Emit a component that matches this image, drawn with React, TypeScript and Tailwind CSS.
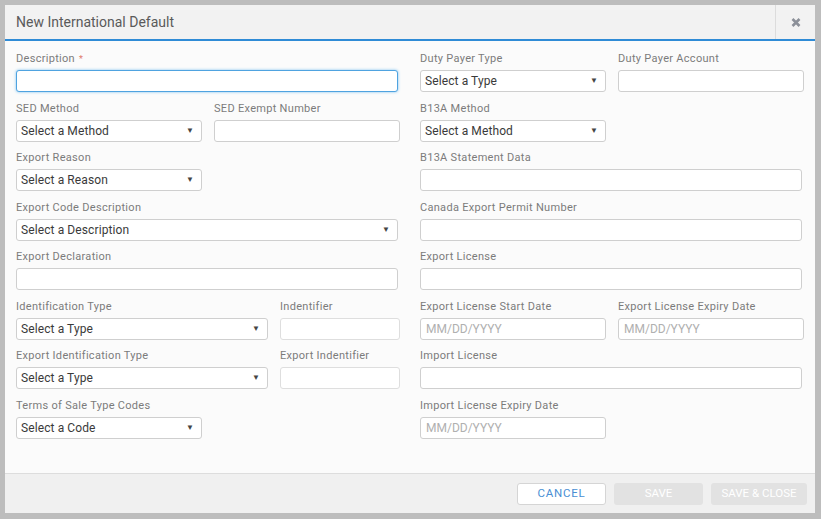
import React from "react";

const font = { fontFamily: "Roboto, 'Liberation Sans', Arial, sans-serif" };

function Label({ text, req }: { text: string; req?: boolean }) {
  return (
    <div className="h-[18px] text-[11px] leading-[14px] text-[#7b7b7b] tracking-[0.3px]">
      {text}
      {req && <span className="ml-[4px] text-[#e07a6a] text-[9px]">*</span>}
    </div>
  );
}

function Select({ text, w }: { text: string; w: string }) {
  return (
    <div
      className={`${w} h-[22px] flex items-center justify-between rounded-[3px] border border-[#cfcfcf] bg-white pl-[4px] pr-[7px] text-[12px] text-[#3a3a3a] tracking-[0.1px]`}
    >
      <span>{text}</span>
      <span className="text-[8px] text-[#444]">▼</span>
    </div>
  );
}

function Input({ w, ph, light, focus }: { w: string; ph?: string; light?: boolean; focus?: boolean }) {
  const border = focus
    ? "border-[#4fa3e0] shadow-[0_0_3px_#7cc0f0]"
    : light
    ? "border-[#dedede]"
    : "border-[#cfcfcf]";
  return (
    <div
      className={`${w} h-[22px] flex items-center rounded-[3px] border ${border} bg-white pl-[5px] text-[12px] text-[#b0b0b0]`}
    >
      {ph}
    </div>
  );
}

function Field({ label, req, children }: { label: string; req?: boolean; children: React.ReactNode }) {
  return (
    <div className="flex flex-col">
      <Label text={label} req={req} />
      {children}
    </div>
  );
}

function Row({ children }: { children: React.ReactNode }) {
  return <div className="flex gap-[12px] h-[49.5px]">{children}</div>;
}

export default function App() {
  return (
    <div className="w-[821px] h-[519px] bg-[#bdbdbd] p-[5px]" style={font}>
      <div className="w-[810px] h-[508px] bg-[#fbfbfb] flex flex-col">
        <div className="h-[36px] flex bg-[#f2f2f2] border-b-2 border-[#2f8bd6]">
          <div className="flex-1 flex items-center pl-[11px] text-[14px] text-[#5a5a5a]">
            New International Default
          </div>
          <div className="w-[40px] border-l border-[#dcdcdc] flex items-center justify-center">
            <svg width="10" height="9" viewBox="0 0 10 9">
              <path d="M1.5 1 L8.5 8 M8.5 1 L1.5 8" stroke="#8c9099" strokeWidth="2.6" strokeLinecap="butt" />
            </svg>
          </div>
        </div>
        <div className="flex-1 flex gap-[20px] pl-[11px] pt-[11px]">
          <div className="w-[384px] flex flex-col">
            <Row>
              <Field label="Description" req>
                <Input w="w-[382px]" focus />
              </Field>
            </Row>
            <Row>
              <Field label="SED Method">
                <Select w="w-[186px]" text="Select a Method" />
              </Field>
              <Field label="SED Exempt Number">
                <Input w="w-[186px]" />
              </Field>
            </Row>
            <Row>
              <Field label="Export Reason">
                <Select w="w-[186px]" text="Select a Reason" />
              </Field>
            </Row>
            <Row>
              <Field label="Export Code Description">
                <Select w="w-[382px]" text="Select a Description" />
              </Field>
            </Row>
            <Row>
              <Field label="Export Declaration">
                <Input w="w-[382px]" />
              </Field>
            </Row>
            <Row>
              <Field label="Identification Type">
                <Select w="w-[252px]" text="Select a Type" />
              </Field>
              <Field label="Indentifier">
                <Input w="w-[120px]" light />
              </Field>
            </Row>
            <Row>
              <Field label="Export Identification Type">
                <Select w="w-[252px]" text="Select a Type" />
              </Field>
              <Field label="Export Indentifier">
                <Input w="w-[120px]" light />
              </Field>
            </Row>
            <Row>
              <Field label="Terms of Sale Type Codes">
                <Select w="w-[186px]" text="Select a Code" />
              </Field>
            </Row>
          </div>
          <div className="w-[384px] flex flex-col">
            <Row>
              <Field label="Duty Payer Type">
                <Select w="w-[186px]" text="Select a Type" />
              </Field>
              <Field label="Duty Payer Account">
                <Input w="w-[186px]" />
              </Field>
            </Row>
            <Row>
              <Field label="B13A Method">
                <Select w="w-[186px]" text="Select a Method" />
              </Field>
            </Row>
            <Row>
              <Field label="B13A Statement Data">
                <Input w="w-[382px]" />
              </Field>
            </Row>
            <Row>
              <Field label="Canada Export Permit Number">
                <Input w="w-[382px]" />
              </Field>
            </Row>
            <Row>
              <Field label="Export License">
                <Input w="w-[382px]" />
              </Field>
            </Row>
            <Row>
              <Field label="Export License Start Date">
                <Input w="w-[186px]" ph="MM/DD/YYYY" />
              </Field>
              <Field label="Export License Expiry Date">
                <Input w="w-[186px]" ph="MM/DD/YYYY" />
              </Field>
            </Row>
            <Row>
              <Field label="Import License">
                <Input w="w-[382px]" />
              </Field>
            </Row>
            <Row>
              <Field label="Import License Expiry Date">
                <Input w="w-[186px]" ph="MM/DD/YYYY" />
              </Field>
            </Row>
          </div>
        </div>
        <div className="h-[40px] bg-[#f0f0f0] border-t border-[#dddddd] flex items-center justify-end gap-[8px] pr-[8px]">
          <div className="w-[89px] h-[22px] rounded-[3px] border border-[#d5d5d5] bg-white flex items-center justify-center text-[11.5px] tracking-[0.8px] text-[#4a8fd4]">
            CANCEL
          </div>
          <div className="w-[89px] h-[22px] rounded-[3px] bg-[#e2e2e2] flex items-center justify-center text-[11.5px] text-white">
            SAVE
          </div>
          <div className="w-[96px] h-[22px] rounded-[3px] bg-[#e2e2e2] flex items-center justify-center text-[11.5px] text-white">
            SAVE &amp; CLOSE
          </div>
        </div>
      </div>
    </div>
  );
}
